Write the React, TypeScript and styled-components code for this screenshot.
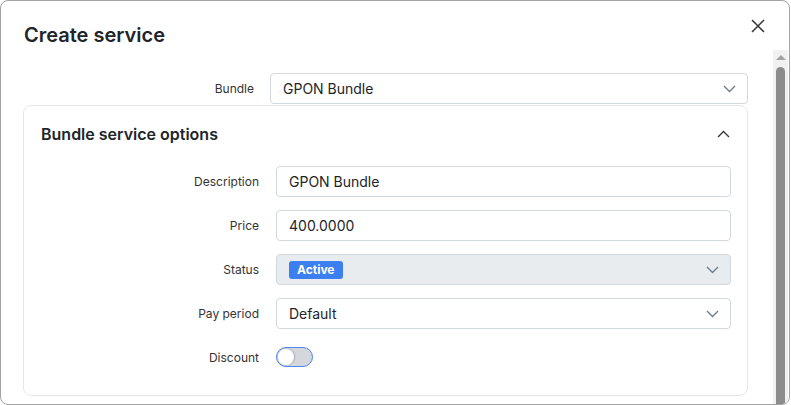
import React from "react";
import styled, { createGlobalStyle } from "styled-components";

const Global = createGlobalStyle`
  html, body { margin: 0; padding: 0; background: #ffffff; }
  body { font-family: Inter, "Noto Sans", sans-serif; color: #212529; }
  * { box-sizing: border-box; }
`;

const Modal = styled.div`
  width: 790px;
  height: 405px;
  border: 1px solid #a3a3a3;
  border-radius: 8px;
  background: #fff;
  display: flex;
  flex-direction: column;
  overflow: hidden;
`;

const Header = styled.div`
  height: 49px;
  flex: none;
  display: flex;
  justify-content: space-between;
  align-items: flex-start;
  padding: 0 23px 0 23px;
`;

const Title = styled.h2`
  margin: 22px 0 0 0;
  font-size: 20px;
  line-height: 24px;
  font-weight: 600;
  color: #212529;
`;

const CloseButton = styled.button`
  margin-top: 17px;
  width: 16px;
  height: 16px;
  padding: 0;
  border: 0;
  background: none;
  display: flex;
  align-items: center;
  justify-content: center;
  color: #333;
`;

const Body = styled.div`
  flex: 1;
  display: flex;
  min-height: 0;
`;

const Content = styled.div`
  flex: 1;
  padding: 23px 25px 0 22px;
  overflow: hidden;
`;

const ScrollTrack = styled.div`
  width: 15px;
  flex: none;
  margin-right: 1px;
  background: #f1f1f1;
  display: flex;
  flex-direction: column;
  align-items: center;
  padding-top: 5px;
`;

const ScrollArrow = styled.div`
  width: 0;
  height: 0;
  border-left: 5px solid transparent;
  border-right: 5px solid transparent;
  border-bottom: 5px solid #a3a3a3;
`;

const ScrollThumb = styled.div`
  margin-top: 7px;
  width: 9px;
  flex: 1;
  background: #8c8c8c;
  border-radius: 5px 5px 0 0;
`;

const FormRow = styled.div<{ $labelWidth: number; $gap?: number }>`
  display: grid;
  grid-template-columns: ${(p) => p.$labelWidth}px 1fr;
  column-gap: ${(p) => p.$gap ?? 16}px;
  align-items: center;
  height: 31px;
`;

const Label = styled.div`
  text-align: right;
  font-size: 12px;
  color: #333;
  line-height: 16px;
`;

const Field = styled.div<{ $disabled?: boolean }>`
  height: 31px;
  border: 1px solid #d3d7de;
  border-radius: 4px;
  background: ${(p) => (p.$disabled ? "#e9ecef" : "#fff")};
  display: flex;
  align-items: center;
  padding: 0 11px 0 12px;
  font-size: 14px;
  color: #212529;
`;

const FieldText = styled.span`
  flex: 1;
`;

const Card = styled.div`
  border: 1px solid #e5e7eb;
  border-radius: 8px;
  padding: 18px 16px 22px 17px;
  margin-top: 1px;
`;

const CardHeader = styled.div`
  display: flex;
  align-items: center;
  justify-content: space-between;
  height: 20px;
  margin-bottom: 22px;
  padding-right: 1px;
`;

const CardTitle = styled.h3`
  margin: 0;
  font-size: 16px;
  font-weight: 600;
  color: #212529;
`;

const Rows = styled.div`
  display: flex;
  flex-direction: column;
  gap: 13px;
`;

const Badge = styled.span`
  display: inline-flex;
  align-items: center;
  height: 18px;
  padding: 0 8px;
  border-radius: 3px;
  background: #3b7ff0;
  color: #fff;
  font-size: 12px;
  font-weight: 700;
`;

const Toggle = styled.div`
  width: 37px;
  height: 20px;
  margin-top: -1px;
  border: 1.5px solid #4a86f0;
  border-radius: 10px;
  background: #d4d7dc;
  display: flex;
  align-items: center;
  padding: 0 1px;
`;

const Knob = styled.div`
  width: 16px;
  height: 16px;
  border-radius: 50%;
  background: #fff;
  box-shadow: 1px 0 2px rgba(0, 0, 0, 0.2);
`;

const Chevron = ({ up }: { up?: boolean }) => (
  <svg width="13" height="8" viewBox="0 0 13 8" fill="none">
    <path
      d={up ? "M1 7L6.5 1.5L12 7" : "M1 1L6.5 6.5L12 1"}
      stroke={up ? "#333" : "#6c7a89"}
      strokeWidth="1.3"
    />
  </svg>
);

export default function App() {
  return (
    <>
      <Global />
      <Modal>
        <Header>
          <Title>Create service</Title>
          <CloseButton aria-label="Close">
            <svg width="14" height="14" viewBox="0 0 14 14">
              <path d="M1 1L13 13M13 1L1 13" stroke="#333" strokeWidth="1.5" />
            </svg>
          </CloseButton>
        </Header>
        <Body>
          <Content>
            <FormRow $labelWidth={231}>
              <Label>Bundle</Label>
              <Field>
                <FieldText>GPON Bundle</FieldText>
                <Chevron />
              </Field>
            </FormRow>
            <Card>
              <CardHeader>
                <CardTitle>Bundle service options</CardTitle>
                <Chevron up />
              </CardHeader>
              <Rows>
                <FormRow $labelWidth={218} $gap={17}>
                  <Label>Description</Label>
                  <Field>
                    <FieldText>GPON Bundle</FieldText>
                  </Field>
                </FormRow>
                <FormRow $labelWidth={218} $gap={17}>
                  <Label>Price</Label>
                  <Field>
                    <FieldText>400.0000</FieldText>
                  </Field>
                </FormRow>
                <FormRow $labelWidth={218} $gap={17}>
                  <Label>Status</Label>
                  <Field $disabled>
                    <FieldText>
                      <Badge>Active</Badge>
                    </FieldText>
                    <Chevron />
                  </Field>
                </FormRow>
                <FormRow $labelWidth={218} $gap={17}>
                  <Label>Pay period</Label>
                  <Field>
                    <FieldText>Default</FieldText>
                    <Chevron />
                  </Field>
                </FormRow>
                <FormRow $labelWidth={218} $gap={17}>
                  <Label>Discount</Label>
                  <div>
                    <Toggle>
                      <Knob />
                    </Toggle>
                  </div>
                </FormRow>
              </Rows>
            </Card>
          </Content>
          <ScrollTrack>
            <ScrollArrow />
            <ScrollThumb />
          </ScrollTrack>
        </Body>
      </Modal>
    </>
  );
}
